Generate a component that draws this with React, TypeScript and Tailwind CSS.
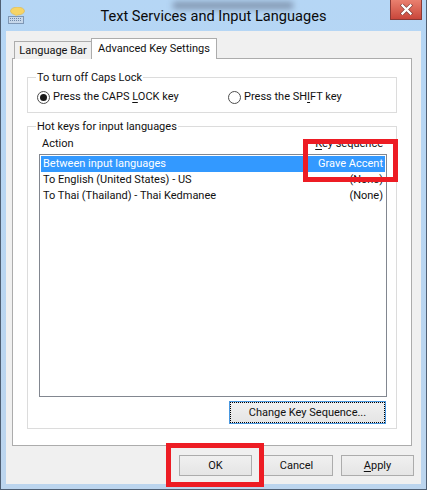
import type { ReactNode } from "react";

function U({ children }: { children: string }) {
  return <span className="underline decoration-1 underline-offset-2">{children}</span>;
}

function Radio({ checked, label, className }: { checked?: boolean; label: ReactNode; className?: string }) {
  return (
    <div className={`flex items-center gap-[3px] ${className ?? ""}`}>
      <span className="flex h-[13px] w-[13px] items-center justify-center rounded-full border border-[#4d4d4d] bg-white">
        {checked && <span className="h-[7px] w-[7px] rounded-full bg-[#1a1a1a]" />}
      </span>
      <span>{label}</span>
    </div>
  );
}

function Group({ title, className, children }: { title: string; className?: string; children: ReactNode }) {
  return (
    <div className={`relative border border-[#dcdcdc] ${className ?? ""}`}>
      <span className="absolute -top-[8px] left-[8px] bg-white px-[1px] leading-[16px]">{title}</span>
      {children}
    </div>
  );
}

function Btn({ children, className }: { children: ReactNode; className?: string }) {
  return (
    <div className={`flex h-[21px] items-center justify-center border border-[#acacac] bg-gradient-to-b from-[#f0f0f0] to-[#e5e5e5] pt-[1px] ${className ?? ""}`}>
      {children}
    </div>
  );
}

export default function App() {
  return (
    <div
      className="relative flex h-[490px] w-[427px] flex-col overflow-hidden border border-t-0 border-[#4f5f73] bg-gradient-to-b from-[#b5d6f5] to-[#bcd5ee] text-[11px] leading-[16px] text-[#111]"
      style={{ fontFamily: 'Roboto, sans-serif' }}
    >
      <div className="absolute left-[172px] top-[2px] h-[7px] w-[120px] bg-[#7f93ad] blur-[3px]" />
      <div className="relative flex h-[31px] shrink-0 items-center justify-center">
        <svg className="absolute left-[7px] top-[7px]" width="17" height="17" viewBox="0 0 17 17">
          <ellipse cx="9.5" cy="4" rx="7" ry="4" fill="#f6d465" stroke="#dcb64e" strokeWidth="0.6" />
          <path d="M7 7.5l1 2 2-2z" fill="#f6d465" />
          <rect x="0.5" y="9.5" width="15" height="7" fill="#c6d7ea" stroke="#7e97b5" />
          <path d="M2 11.5h12M2 13.5h12" stroke="#6f88a8" strokeDasharray="1 1" />
        </svg>
        <span className="text-[14.6px] leading-[20px] text-[#0b0b0b]">Text Services and Input Languages</span>
        <div className="absolute right-[4px] top-0 flex h-[20px] w-[32px] items-center justify-center border border-t-0 border-[#8a3a36] bg-gradient-to-b from-[#e9806f] to-[#c9463b]">
          <svg width="13" height="11" viewBox="0 0 13 11">
            <path d="M2.5 1.5l8 8M10.5 1.5l-8 8" stroke="#5b2b28" strokeWidth="3.6" strokeLinecap="square" opacity="0.75" />
            <path d="M2.5 1.5l8 8M10.5 1.5l-8 8" stroke="#fff" strokeWidth="2.4" strokeLinecap="square" />
          </svg>
        </div>
      </div>

      <div className="mx-[5px] flex h-[453px] shrink-0 flex-col bg-[#f0f0f0] pl-[6px] pr-[7px] pt-[7px]">
        <div className="relative z-10 -mb-[1px] flex h-[21px] shrink-0 items-end pl-[2px]">
          <div className="flex h-[18px] w-[78px] items-center justify-center border border-b-0 border-[#acacac] bg-[#f0f0f0]">Language Bar</div>
          <div className="-ml-[1px] flex h-[21px] w-[126px] items-start justify-center border border-b-0 border-[#acacac] bg-white pt-[2px]">Advanced Key Settings</div>
        </div>
        <div className="flex h-[388px] w-[400px] shrink-0 flex-col gap-[13px] border border-[#acacac] bg-white px-[14px] pt-[18px]">
          <Group title="To turn off Caps Lock" className="h-[36px] shrink-0">
            <div className="flex pl-[9px] pt-[11px]">
              <Radio checked label={<>Press the CAPS <U>L</U>OCK key</>} className="w-[191px]" />
              <Radio label={<>Press the SH<U>I</U>FT key</>} />
            </div>
          </Group>
          <Group title="Hot keys for input languages" className="h-[303px] shrink-0 pl-[11px] pr-[10px]">
            <div className="flex h-[27px] items-end justify-between pb-[2px] pl-[3px] pr-[3px]">
              <span>Action</span>
              <span><U>K</U>ey sequence</span>
            </div>
            <div className="h-[243px] w-[348px] border border-[#828790] bg-white p-[1px]">
              <div className="flex h-[16px] items-center justify-between bg-[#3399ff] px-[2px] text-white">
                <span>Between input languages</span>
                <span>Grave Accent</span>
              </div>
              <div className="flex h-[16px] items-center justify-between px-[2px]">
                <span>To English (United States) - US</span>
                <span>(None)</span>
              </div>
              <div className="flex h-[16px] items-center justify-between px-[2px]">
                <span>To Thai (Thailand) - Thai Kedmanee</span>
                <span>(None)</span>
              </div>
            </div>
            <div className="mt-[4px] flex justify-end">
              <div className="border border-[#4a98e0]">
                <Btn className="h-[19px] w-[155px] !border-dotted !border-black">Change Key Sequence...</Btn>
              </div>
            </div>
          </Group>
        </div>
        <div className="flex justify-end gap-[8px] pt-[9px]">
          <Btn className="w-[73px]">OK</Btn>
          <Btn className="w-[73px]">Cancel</Btn>
          <Btn className="w-[73px]"><span><U>A</U>pply</span></Btn>
        </div>
      </div>

      <div className="absolute left-[302px] top-[139px] h-[43px] w-[95px] border-[5px] border-[#ed1c24]" />
      <div className="absolute left-[165px] top-[443px] h-[44px] w-[98px] border-[5px] border-[#ed1c24]" />
    </div>
  );
}
